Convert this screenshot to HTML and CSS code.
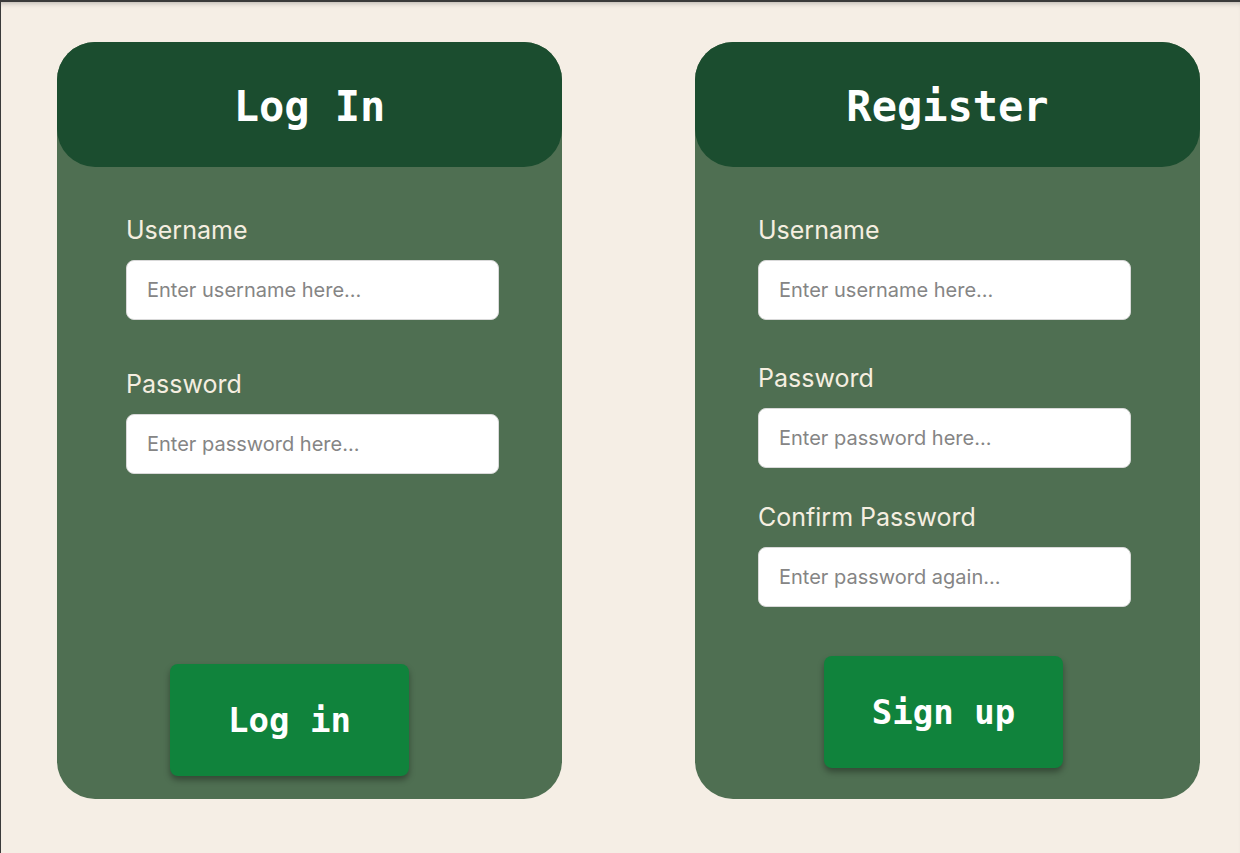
FILE: index.html
```html
<!DOCTYPE html>
<html lang="en">
<head>
<meta charset="utf-8">
<title>Log In / Register</title>
<link rel="stylesheet" href="styles.css">
</head>
<body>
<main class="page">
  <section class="card card-login">
    <header class="card-head"><h1 class="card-title">Log In</h1></header>
    <form class="card-body">
      <label class="field-label" for="lu">Username</label>
      <input class="field-input" id="lu" type="text" placeholder="Enter username here...">
      <label class="field-label gap-login" for="lp">Password</label>
      <input class="field-input" id="lp" type="password" placeholder="Enter password here...">
      <button class="btn btn-login" type="button">Log in</button>
    </form>
  </section>
  <section class="card card-register">
    <header class="card-head"><h1 class="card-title">Register</h1></header>
    <form class="card-body">
      <label class="field-label" for="ru">Username</label>
      <input class="field-input" id="ru" type="text" placeholder="Enter username here...">
      <label class="field-label gap-reg1" for="rp">Password</label>
      <input class="field-input" id="rp" type="password" placeholder="Enter password here...">
      <label class="field-label gap-reg2" for="rc">Confirm Password</label>
      <input class="field-input" id="rc" type="password" placeholder="Enter password again...">
      <button class="btn btn-register" type="button">Sign up</button>
    </form>
  </section>
</main>
</body>
</html>
```

FILE: styles.css
```css
html, body {
  margin: 0;
  padding: 0;
  height: 100%;
}
body {
  background: #f5eee5;
  font-family: "Inter", "Noto Sans", sans-serif;
  box-shadow: inset 1px 2px 0 #3a3a3a, inset 0 7px 6px -5px rgba(0, 0, 0, 0.35);
  min-height: 853px;
  box-sizing: border-box;
}
.page {
  display: flex;
  gap: 133px;
  padding: 42px 0 0 57px;
}
.card {
  width: 505px;
  height: 757px;
  background: #4f6f52;
  border-radius: 38px;
  display: flex;
  flex-direction: column;
}
.card-head {
  box-sizing: border-box;
  height: 125px;
  padding-top: 5px;
  background: #1b4d2f;
  border-radius: 38px;
  display: flex;
  align-items: center;
  justify-content: center;
}
.card-title {
  margin: 0;
  color: #ffffff;
  font-family: "DejaVu Sans Mono", "Liberation Mono", monospace;
  font-weight: bold;
  font-size: 42px;
  line-height: 1;
}
.card-body {
  flex: 1;
  display: flex;
  flex-direction: column;
  align-items: flex-start;
  padding-top: 49px;
}
.card-login .card-body { padding-left: 69px; }
.card-register .card-body { padding-left: 63px; }
.field-label {
  color: #f5eee0;
  font-size: 25px;
  line-height: 29px;
  margin-bottom: 15px;
}
.gap-login { margin-top: 50px; }
.gap-reg1 { margin-top: 44px; }
.gap-reg2 { margin-top: 35px; }
.field-input {
  box-sizing: border-box;
  width: 373px;
  height: 60px;
  margin: 0;
  padding: 0 20px;
  border: 1px solid #d9d9d9;
  border-radius: 8px;
  background: #ffffff;
  font-family: "Inter", "Noto Sans", sans-serif;
  font-size: 20px;
  color: #333;
  outline: none;
}
.field-input::placeholder {
  color: #858585;
}
.btn {
  box-sizing: border-box;
  width: 239px;
  height: 112px;
  border: none;
  border-radius: 8px;
  background: #10833c;
  color: #ffffff;
  font-family: "DejaVu Sans Mono", "Liberation Mono", monospace;
  font-weight: bold;
  font-size: 34px;
  box-shadow: 0 4px 6px rgba(0, 0, 0, 0.35);
  cursor: pointer;
}
.btn-login {
  margin-top: auto;
  margin-bottom: 23px;
  margin-left: 44px;
}
.btn-register {
  margin-top: 49px;
  margin-left: 66px;
}
```
